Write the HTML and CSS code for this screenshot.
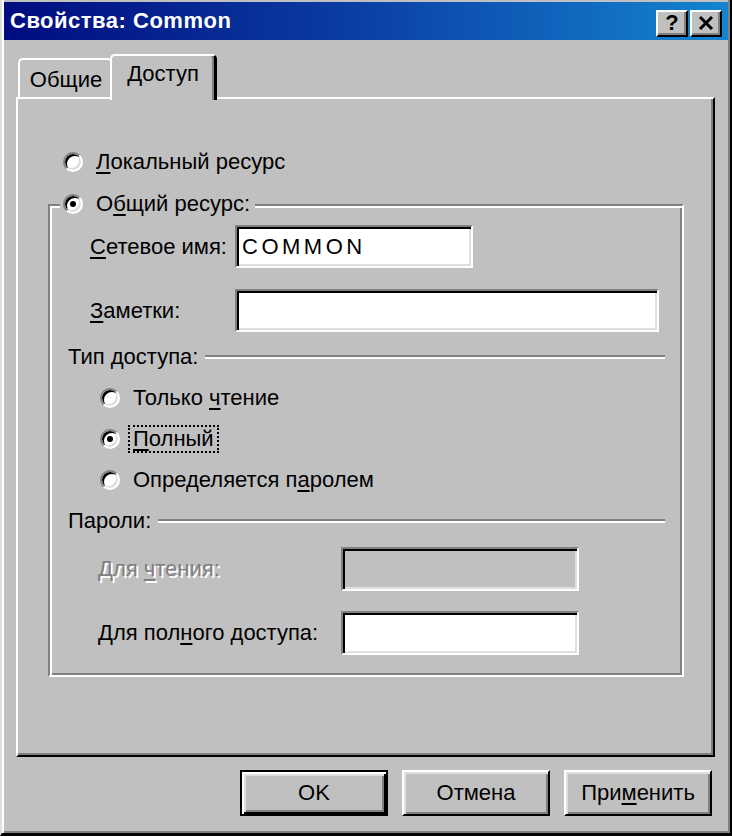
FILE: index.html
```html
<!DOCTYPE html>
<html lang="ru">
<head>
<meta charset="utf-8">
<title>Свойства: Common</title>
<link rel="stylesheet" href="styles.css">
</head>
<body>
<div class="window">
  <div class="titlebar">
    <span class="title">Свойства: Common</span>
    <div class="tb-btns">
      <span class="tb-btn help">?</span>
      <span class="tb-btn close"><svg width="16" height="14" viewBox="0 0 16 14"><path d="M2 1 L14 13 M14 1 L2 13" stroke="#000" stroke-width="3" fill="none"/></svg></span>
    </div>
  </div>

  <div class="tabs">
    <div class="tab">Общие</div>
    <div class="tab active">Доступ</div>
  </div>

  <div class="panel">
    <div class="radio-row top-radio">
      <span class="radio"></span>
      <span class="lbl"><u>Л</u>окальный ресурс</span>
    </div>

    <div class="group">
      <div class="legend">
        <span class="radio checked"></span>
        <span class="lbl">О<u>б</u>щий ресурс:</span>
      </div>

      <div class="field-row row-name">
        <span class="flabel"><u>С</u>етевое имя:</span>
        <div class="input w-name">COMMON</div>
      </div>

      <div class="field-row row-notes">
        <span class="flabel"><u>З</u>аметки:</span>
        <div class="input w-notes"></div>
      </div>

      <div class="section sec-type">
        <span>Тип доступа:</span>
        <span class="etch"></span>
      </div>

      <div class="radios">
        <div class="radio-row">
          <span class="radio"></span>
          <span class="lbl">Только <u>ч</u>тение</span>
        </div>
        <div class="radio-row">
          <span class="radio checked"></span>
          <span class="lbl focus"><u>П</u>олный</span>
        </div>
        <div class="radio-row">
          <span class="radio"></span>
          <span class="lbl">Определяется п<u>а</u>ролем</span>
        </div>
      </div>

      <div class="section sec-pw">
        <span>Пароли:</span>
        <span class="etch"></span>
      </div>

      <div class="field-row pw-row pw-first">
        <span class="flabel wide disabled">Для <u>ч</u>тения:</span>
        <div class="input w-pw is-disabled"></div>
      </div>

      <div class="field-row pw-row pw-second">
        <span class="flabel wide">Для пол<u>н</u>ого доступа:</span>
        <div class="input w-pw"></div>
      </div>
    </div>
  </div>

  <div class="buttons">
    <span class="btn default">OK</span>
    <span class="btn">Отмена</span>
    <span class="btn">При<u>м</u>енить</span>
  </div>
</div>
</body>
</html>
```

FILE: styles.css
```css
html, body {
  margin: 0;
  padding: 0;
  background: #c0c0c0;
}

body {
  font-family: "Liberation Sans", Arial, sans-serif;
  font-size: 22px;
  color: #000;
}

u {
  text-decoration-thickness: 2px;
  text-underline-offset: 3px;
}

.window {
  width: 732px;
  height: 836px;
  box-sizing: border-box;
  background: #c0c0c0;
  border-right: 2px solid #000;
  border-bottom: 3px solid #000;
  border-left: 2px solid #dfdfdf;
  box-shadow: inset 2px 0 0 #fff, inset -2px -2px 0 #808080;
  padding: 2px 2px 0 2px;
  display: flex;
  flex-direction: column;
}

/* Title bar */
.titlebar {
  height: 38px;
  flex: none;
  display: flex;
  align-items: center;
  justify-content: space-between;
  background: linear-gradient(to right, #000c80 0%, #0a3aa0 45%, #1484d2 100%);
  padding: 0 6px 0 6px;
}

.title {
  color: #fff;
  font-weight: bold;
  font-size: 22px;
  letter-spacing: 0.5px;
}

.tb-btns {
  display: flex;
  gap: 2px;
  margin-top: 4px;
}

.tb-btn {
  width: 32px;
  height: 27px;
  box-sizing: border-box;
  background: #c0c0c0;
  border: 2px solid;
  border-color: #fff #000 #000 #fff;
  box-shadow: inset -2px -2px 0 #808080;
  display: flex;
  align-items: center;
  justify-content: center;
  font-weight: bold;
  font-size: 22px;
  line-height: 1;
}

/* Tabs */
.tabs {
  flex: none;
  display: flex;
  align-items: flex-end;
  height: 43px;
  margin-top: 14px;
  padding-left: 14px;
}

.tab {
  height: 39px;
  box-sizing: border-box;
  display: flex;
  align-items: center;
  justify-content: center;
  border-top: 2px solid #fff;
  border-left: 2px solid #fff;
  border-radius: 5px 5px 0 0;
  width: 94px;
  padding-top: 2px;
}

.tab.active {
  height: 46px;
  width: 107px;
  margin-left: -2px;
  margin-bottom: -3px;
  border-right: 3px solid #000;
  box-shadow: inset -2px 0 0 #808080;
  background: #c0c0c0;
  position: relative;
  z-index: 2;
  padding-top: 0;
  padding-bottom: 8px;
}

/* Panel */
.panel {
  flex: none;
  height: 660px;
  box-sizing: border-box;
  margin: 0 13px 0 12px;
  border: 2px solid;
  border-color: #fff #000 #000 #fff;
  box-shadow: inset -2px -2px 0 #808080;
  position: relative;
  z-index: 1;
}

.radio-row {
  display: flex;
  align-items: center;
  height: 30px;
}

.top-radio {
  margin-top: 49px;
  margin-left: 45px;
  height: 28px;
}

.radio {
  flex: none;
  width: 20px;
  height: 20px;
  box-sizing: border-box;
  border-radius: 50%;
  background: #fff;
  border: 2px solid;
  border-color: #808080 #fff #fff #808080;
  box-shadow: inset 2px 2px 0 #000, inset -2px -2px 0 #dfdfdf;
  display: flex;
  align-items: center;
  justify-content: center;
  margin-right: 13px;
}

.radio.checked::after {
  content: "";
  width: 6px;
  height: 6px;
  border-radius: 50%;
  background: #000;
}

.lbl.focus {
  border: 2px dotted #000;
  padding: 0 3px;
  margin-left: -5px;
  line-height: 24px;
}

/* Group */
.group {
  margin: 28px 29px 0 30px;
  border: 2px solid;
  border-color: #808080 #fff #fff #808080;
  box-shadow: inset 2px 2px 0 #fff, inset -2px -2px 0 #808080;
  padding-bottom: 20px;
}

.legend {
  display: flex;
  align-items: center;
  width: max-content;
  height: 28px;
  margin-top: -16px;
  margin-left: 10px;
  padding: 0 5px 0 3px;
  background: #c0c0c0;
  position: relative;
}

.field-row {
  display: flex;
  align-items: center;
  padding-left: 40px;
}

.flabel {
  width: 145px;
  flex: none;
}

.input {
  box-sizing: border-box;
  height: 43px;
  background: #fff;
  border: 2px solid;
  border-color: #808080 #fff #fff #808080;
  box-shadow: inset 2px 2px 0 #000, inset -2px -2px 0 #dfdfdf;
  display: flex;
  align-items: center;
  padding-left: 5px;
  font-size: 22px;
  letter-spacing: 3.5px;
}

.row-name { margin-top: 7px; }
.row-notes { margin-top: 21px; }

.w-name { width: 238px; }
.w-notes { width: 424px; }

.section {
  display: flex;
  align-items: center;
  height: 24px;
  padding-left: 18px;
  padding-right: 17px;
}

.sec-type { margin-top: 13px; }
.sec-pw { margin-top: 14px; }

.etch {
  flex: 1;
  height: 0;
  margin-left: 7px;
  border-top: 2px solid #808080;
  border-bottom: 2px solid #fff;
}

.radios {
  display: flex;
  flex-direction: column;
  gap: 11px;
  margin-top: 14px;
  padding-left: 50px;
}

.pw-row { padding-left: 48px; }
.pw-first { margin-top: 14px; }
.pw-second { margin-top: 20px; }

.flabel.wide { width: 243px; }

.w-pw { width: 238px; height: 44px; }

.input.is-disabled { background: #c0c0c0; }

.disabled {
  color: #808080;
  text-shadow: 2px 2px 0 #fff;
}

/* Buttons */
.buttons {
  flex: none;
  display: flex;
  justify-content: flex-end;
  gap: 14px;
  margin-top: 13px;
  padding-right: 16px;
}

.btn {
  width: 148px;
  height: 46px;
  box-sizing: border-box;
  border: 2px solid;
  border-color: #fff #000 #000 #fff;
  box-shadow: inset 2px 2px 0 #dfdfdf, inset -2px -2px 0 #808080;
  display: flex;
  align-items: center;
  justify-content: center;
}

.btn.default {
  border-color: #000;
  box-shadow: inset 2px 2px 0 #fff, inset -2px -2px 0 #000, inset 4px 4px 0 #dfdfdf, inset -4px -4px 0 #808080;
}
```
